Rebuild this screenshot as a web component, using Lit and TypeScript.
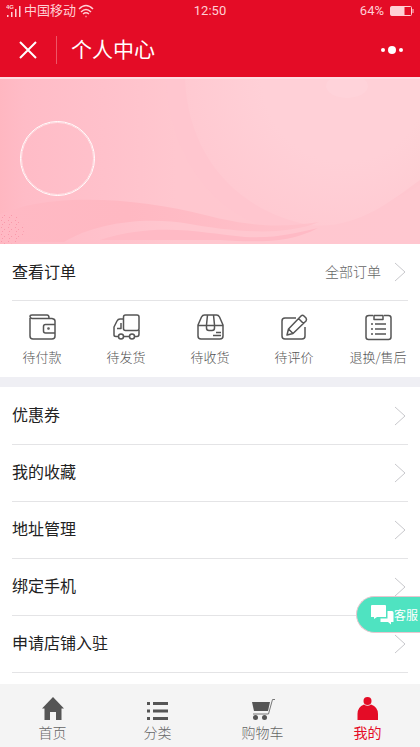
import { LitElement, html, css, svg } from "lit";
import { customElement } from "lit/decorators.js";
import { classMap } from "lit/directives/class-map.js";

const orderIcons = {
  wallet: svg`<path d="M2 5V23Q2 26 5 26H24Q27 26 27 23V8Q27 6 24 5.500H4Q2 5 2 3.500Q2 2 4 2H19Q21 2 21 5"/><path d="M27 11.500H17.500Q15.500 11.500 15.500 13.500V18Q15.500 20 17.500 20H27"/><circle cx="20.500" cy="15.500" r=".6"/>`,
  truck: svg`<rect x="11.500" y="2" width="15.500" height="15.500" rx="2"/><path d="M11.500 6H8Q6 6 5 8L2 14V22Q2 23.500 4 23.500H6M12 23.500H17M23 23.500H25Q27 23.500 27 21V17M9 10V15.500H5"/><circle cx="9" cy="23.500" r="2.500"/><circle cx="20" cy="23.500" r="2.500"/>`,
  parcel: svg`<path d="M2 12V23Q2 26 5 26H24Q27 26 27 23V12L23.500 4Q22.500 2 20.500 2H8.500Q6.500 2 5.500 4ZM2 12.500H27M11.500 2L10.500 12V15Q10.500 17.500 13 17.500H16Q18.500 17.500 18.500 15V12L17.500 2M20 19.500H25M17 22.500H25"/>`,
  review: svg`<path d="M16 5H5Q2 5 2 8V23Q2 26 5 26H22Q25 26 25 23V14M7 22L8.500 16L21 3Q22.500 1.500 24 3L26 5Q27 6.500 26 8L13 20.500ZM18.500 5.500L23.500 10.500M8.500 16L13 20.500"/>`,
  list: svg`<path d="M9 2.500H5Q2 2.500 2 5V24Q2 26.500 4.500 26.500H24.500Q27 26.500 27 24V5Q27 2.500 24.500 2.500H20M10 2.500H19V6.500H10ZM7 11H9M11 11H22M7 16H9M11 16H22M7 21H9M11 21H22"/>`,
};

const tabIcons = {
  home: svg`<path d="M12 1L1 12.500H3.500V24H9V16H15V24H20.500V12.500H23L12 1Z"/>`,
  category: svg`<path d="M1 6H4V9H1ZM7 6H22V9H7ZM1 13.500H4V16.500H1ZM7 13.500H22V16.500H7ZM1 21H4V24H1ZM7 21H22V24H7Z"/>`,
  cart: svg`<path d="M1 6H19L17 15H3Z"/><path class="line" d="M24 3.500H21.500L17.500 18H2"/><circle cx="4.500" cy="21.500" r="2.500"/><circle cx="13.500" cy="21.500" r="2.500"/>`,
  mine: svg`<circle cx="11.500" cy="5" r="4"/><path d="M8 8.500Q1.500 11 1.500 18V24H22V18Q22 11 15 8.500Q11.500 11 8 8.500Z"/>`,
};

const orders = [
  { label: "待付款", icon: orderIcons.wallet },
  { label: "待发货", icon: orderIcons.truck },
  { label: "待收货", icon: orderIcons.parcel },
  { label: "待评价", icon: orderIcons.review },
  { label: "退换/售后", icon: orderIcons.list },
];

const menu = ["优惠券", "我的收藏", "地址管理", "绑定手机", "申请店铺入驻"];

const tabs = [
  { label: "首页", icon: tabIcons.home, active: false },
  { label: "分类", icon: tabIcons.category, active: false },
  { label: "购物车", icon: tabIcons.cart, active: false },
  { label: "我的", icon: tabIcons.mine, active: true },
];

const chevron = html`<svg class="chevron" viewBox="0 0 12 20" aria-hidden="true"><path d="M1 1L11 10L1 19" /></svg>`;

@customElement("app-root")
export class AppRoot extends LitElement {
  static styles = css`
    :host {
      display: flex;
      flex-direction: column;
      position: relative;
      min-height: 100vh;
      background: #fff;
      color: #222;
      font-family: "Noto Sans CJK SC", sans-serif;
      font-size: 16px;
      line-height: 24px;
    }
    * { box-sizing: border-box; }
    a { color: inherit; text-decoration: none; }
    button { border: 0; padding: 0; background: none; color: inherit; font: inherit; cursor: pointer; }
    svg { display: block; flex: none; }

    .top { background: #e40c26; color: #fff; }
    .status {
      display: grid;
      grid-template-columns: 1fr auto 1fr;
      align-items: center;
      height: 22px;
      padding: 0 6px;
      font-size: 13px;
      line-height: 20px;
      color: #ffd0d5;
    }
    .carrier, .power { display: flex; align-items: center; gap: 2px; }
    .carrier span { padding-bottom: 2px; }
    .power { justify-content: flex-end; gap: 6px; }
    .clock, .percent { font-family: Roboto, sans-serif; }
    .signal { width: 16px; height: 14px; fill: currentColor; }
    .signal text { font: bold 6px "Liberation Sans", sans-serif; }
    .wifi { width: 16px; height: 14px; fill: none; stroke: currentColor; stroke-width: 1.5; }
    .battery { width: 24px; height: 12px; fill: none; stroke: currentColor; }
    .battery .fill { fill: currentColor; }

    .bar { display: flex; align-items: center; height: 55px; padding: 0 16px 0 18px; }
    .close { width: 20px; height: 20px; }
    .close svg { width: 20px; height: 20px; fill: none; stroke: #fff; stroke-width: 2; }
    .title {
      flex: 1;
      margin: 0 0 0 18px;
      padding: 0 0 4px 14px;
      border-left: 1px solid #ee5567;
      font-size: 21px;
      font-weight: 400;
      line-height: 24px;
    }
    .more { width: 24px; height: 20px; }
    .more svg { width: 24px; height: 20px; fill: #fff; }

    .banner {
      display: flex;
      align-items: flex-start;
      position: relative;
      height: 167px;
      padding: 42px 20px;
      border-top: 2px solid #ffdce1;
      background: #ffc3cb;
    }
    .art { position: absolute; inset: 0; width: 100%; height: 100%; }
    .avatar { position: relative; width: 75px; height: 75px; border: 1px solid #fff; border-radius: 50%; outline: 1px solid #ffe2e6; outline-offset: -2px; }

    .row {
      display: flex;
      align-items: center;
      justify-content: space-between;
      height: 57px;
      margin: 0 12px;
      border-bottom: 1px solid #e4e4e6;
    }
    .row h2 { margin: 0; padding-bottom: 2px; font-size: 16px; font-weight: 400; }
    .row span { padding-bottom: 4px; }
    .all { display: flex; align-items: center; gap: 13px; font-size: 14px; font-weight: 300; color: #666; }
    .row .all span { padding-bottom: 2px; }
    .chevron { width: 12px; height: 20px; margin-right: 2px; fill: none; stroke: #c8c8cc; }

    .orders { display: grid; grid-template-columns: repeat(5, 1fr); height: 76px; padding-top: 12px; }
    .order { display: flex; flex-direction: column; align-items: center; gap: 5px; font-size: 13px; font-weight: 300; line-height: 20px; color: #555; white-space: nowrap; }
    .order svg { width: 29px; height: 29px; fill: none; stroke: #555; stroke-width: 1.5; stroke-linejoin: round; }
    .gap { height: 10px; background: #efeff4; }
    .menu { flex: 1; padding-bottom: 11px; }
    .links { padding-top: 1px; }

    .service {
      display: flex;
      align-items: center;
      position: fixed;
      right: 0;
      bottom: 114px;
      width: 64px;
      height: 37px;
      padding-left: 13px;
      border: 1px solid #e9c6cf;
      border-right: 0;
      border-radius: 19px 0 0 19px;
      background: #4fe3c1;
      color: #fff;
      font-size: 12px;
      white-space: nowrap;
    }
    .service svg { width: 24px; height: 20px; fill: #fff; }

    .tabs { display: grid; grid-template-columns: repeat(4, 1fr); height: 63px; padding-top: 12px; background: #f4f4f4; }
    .tab { display: flex; flex-direction: column; align-items: center; font-size: 14px; font-weight: 300; line-height: 22px; color: #666; }
    .tab svg { width: 24px; height: 25px; fill: #555; overflow: visible; }
    .tab .line { fill: none; stroke: #777; }
    .tab.active { color: #e40c26; font-weight: 400; }
    .tab.active svg { fill: #e40c26; }
  `;

  render() {
    return html`
      <header class="top">
        <div class="status">
          <div class="carrier">
            <svg class="signal" viewBox="0 0 16 14" aria-hidden="true">
              <text x="0" y="5">4G</text>
              <path d="M1 11H2.500V13H1ZM5 8H6.500V13H5ZM9 5H10.500V13H9ZM13 2H14.500V13H13Z" />
            </svg>
            <span>中国移动</span>
            <svg class="wifi" viewBox="0 0 16 14" aria-hidden="true">
              <path d="M1 5Q8 -2 15 5M3 8Q8 3 13 8M5 10Q8 7.500 11 10M7.500 12.500H8.500" />
            </svg>
          </div>
          <span class="clock">12:50</span>
          <div class="power">
            <span class="percent">64%</span>
            <svg class="battery" viewBox="0 0 24 12" aria-hidden="true">
              <rect x=".5" y="1.500" width="21" height="9" rx="1" /><path class="fill" d="M1 2H14V10H1Z" /><path d="M23 4V8" />
            </svg>
          </div>
        </div>
        <div class="bar">
          <button class="close" aria-label="关闭"><svg viewBox="0 0 20 20"><path d="M2 2L18 18M18 2L2 18" /></svg></button>
          <h1 class="title">个人中心</h1>
          <button class="more" aria-label="更多">
            <svg viewBox="0 0 24 20"><circle cx="3" cy="10" r="2" /><circle cx="12" cy="10" r="4" /><circle cx="21" cy="10" r="2" /></svg>
          </button>
        </div>
      </header>

      <section class="banner">
        <svg class="art" viewBox="0 0 420 165" preserveAspectRatio="none" aria-hidden="true">
          <defs>
            <linearGradient id="base"><stop offset="0" stop-color="#ffb7c1" /><stop offset=".06" stop-color="#ffbcc7" /><stop offset=".25" stop-color="#ffc1cb" /><stop offset=".42" stop-color="#ffc7cf" /><stop offset="1" stop-color="#ffc7d0" /></linearGradient>
            <linearGradient id="wave"><stop offset="0" stop-color="#ffb9c4" /><stop offset=".4" stop-color="#ffb8c2" /><stop offset="1" stop-color="#ffc2cb" /></linearGradient>
            <radialGradient id="glow" gradientUnits="userSpaceOnUse" cx="345" cy="0" r="165"><stop offset=".5" stop-color="#ffd0d7" /><stop offset="1" stop-color="#ffc9d1" /></radialGradient>
            <pattern id="dots" width="7" height="7" patternUnits="userSpaceOnUse"><path d="M1 1h1v1h-1zM4 3h1v1h-1zM2 5h1v1h-1z" fill="#f99aab" /></pattern>
          </defs>
          <rect width="420" height="165" fill="url(#base)" />
          <path d="M166 0C169 72 207 126 258 145C325 154 390 126 420 105V0Z" fill="#ffc6cf" />
          <path d="M185 0C188 75 235 132 310 146C355 151 390 123 420 101V0Z" fill="url(#glow)" />
          <path d="M25 127C80 115 150 122 205 136C255 149 285 148 319 143C280 159 225 151 190 145C145 137 95 144 64 163H0V135Z" fill="url(#wave)" />
          <path d="M100 161C160 142 205 155 245 158C275 160 300 153 318 149C288 165 255 163 220 161Z" fill="#ffbac5" />
          <ellipse cx="7" cy="150" rx="17" ry="15" fill="url(#dots)" />
          <ellipse cx="347" cy="7" rx="21" ry="12" fill="#ffd8de" opacity=".4" />
        </svg>
        <div class="avatar"></div>
      </section>

      <main class="menu">
        <section>
          <div class="row">
            <h2>查看订单</h2>
            <a class="all" href="#orders"><span>全部订单</span>${chevron}</a>
          </div>
          <div class="orders">
            ${orders.map((o) => html`<a class="order" href="#order"><svg viewBox="0 0 29 29" aria-hidden="true">${o.icon}</svg><span>${o.label}</span></a>`)}
          </div>
        </section>
        <div class="gap"></div>
        <nav class="links">${menu.map((label) => html`<a class="row" href="#menu"><span>${label}</span>${chevron}</a>`)}</nav>
      </main>

      <button class="service">
        <svg viewBox="0 0 24 20" aria-hidden="true"><path d="M2 0H15Q16 0 16 1V12H7L4 14V12H1V1Q1 0 2 0ZM17.500 6H22Q23.500 6 23.500 7.500V17H21V19.500L18 17H10.500V13.500H17.500Z" /></svg>
        <span>客服</span>
      </button>

      <nav class="tabs">
        ${tabs.map((t) => html`<a class=${classMap({ tab: true, active: t.active })} href="#tab"><svg viewBox="0 0 24 25" aria-hidden="true">${t.icon}</svg><span>${t.label}</span></a>`)}
      </nav>
    `;
  }
}
